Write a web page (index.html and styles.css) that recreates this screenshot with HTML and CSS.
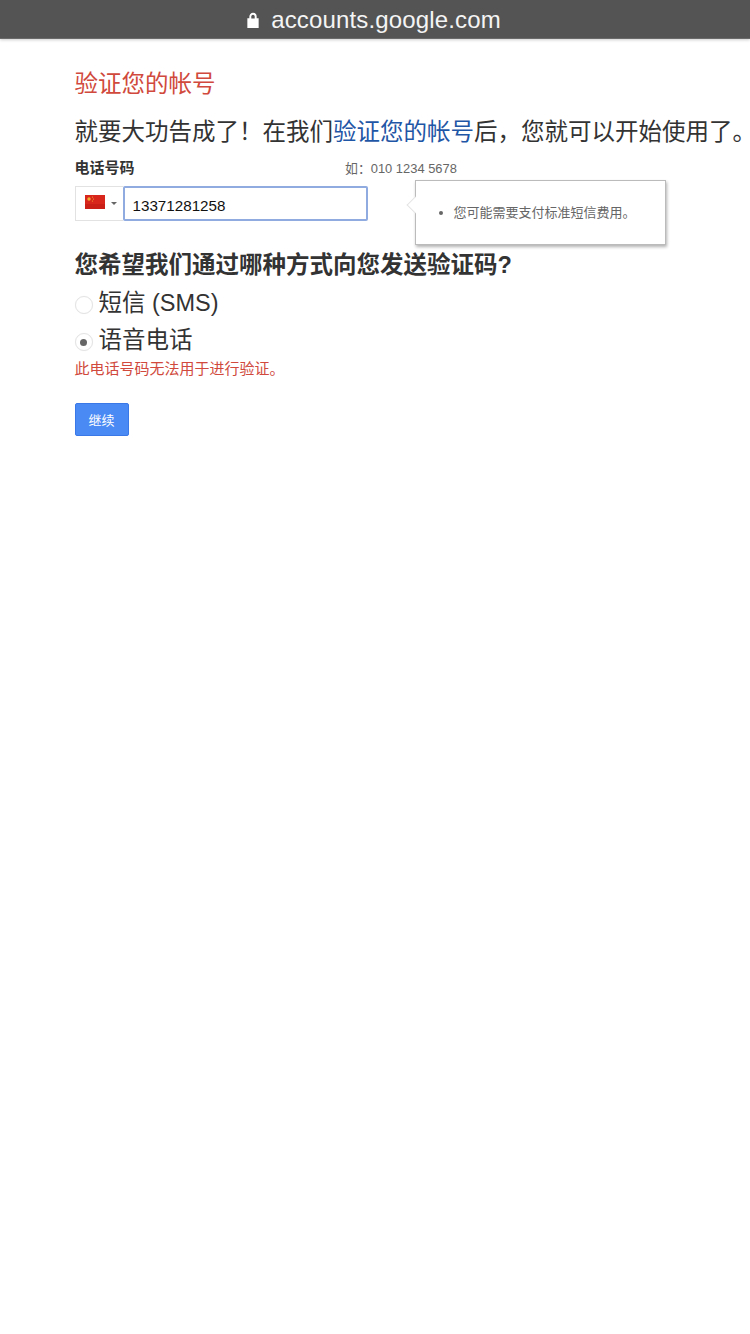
FILE: index.html

```html
<!DOCTYPE html>
<html lang="zh">
<head>
  <meta charset="utf-8">
  <title>验证您的帐号</title>
  <link rel="stylesheet" href="styles.css">
</head>
<body>
  <div class="topbar">
    <svg class="lock" width="12" height="16" viewBox="0 0 12 16">
      <path d="M1 7h10v8.500H1z M3 7V4.500a3 3 0 0 1 6 0V7" fill="#fff" stroke="#fff" stroke-width="1.300" fill-rule="nonzero"/>
      <path d="M4.300 6.500V4.500a1.700 1.700 0 0 1 3.400 0v2z" fill="#555"/>
    </svg>
    <span class="url">accounts.google.com</span>
  </div>

  <div class="contenido">
    <h1 class="titulo">验证您的帐号</h1>
    <p class="intro">就要大功告成了！在我们<a href="#">验证您的帐号</a>后，您就可以开始使用了<span class="punto">。</span></p>

    <div class="fila-label">
      <label class="label-tel" for="tel">电话号码</label>
      <span class="ejemplo">如：010 1234 5678</span>
    </div>

    <div class="fila-tel">
      <div class="pais">
        <svg class="bandera" width="20" height="14" viewBox="0 0 20 14">
          <rect width="20" height="14" fill="#d8261c"/>
          <rect y="9" width="20" height="5" fill="#c01a14" opacity=".6"/>
          <circle cx="4" cy="4" r="1.700" fill="#f0b030"/>
          <circle cx="7.500" cy="2" r=".6" fill="#f0b030"/>
          <circle cx="8.500" cy="4" r=".6" fill="#f0b030"/>
          <circle cx="7.500" cy="6" r=".6" fill="#f0b030"/>
        </svg>
        <span class="flecha"></span>
      </div>
      <input class="tel" id="tel" type="text" value="13371281258">
      <div class="tooltip">
        <span class="tooltip-punta"></span>
        <ul>
          <li>您可能需要支付标准短信费用。</li>
        </ul>
      </div>
    </div>

    <h2 class="pregunta">您希望我们通过哪种方式向您发送验证码?</h2>

    <div class="opcion">
      <span class="radio"></span>
      <span>短信 (SMS)</span>
    </div>
    <div class="opcion opcion-2">
      <span class="radio marcado"></span>
      <span>语音电话</span>
    </div>

    <p class="error">此电话号码无法用于进行验证。</p>

    <button class="continuar" type="button">继续</button>
  </div>
</body>
</html>
```

FILE: styles.css

```css
body {
  font-family: "Liberation Sans", "Noto Sans CJK SC", sans-serif;
  margin: 0;
  padding: 0;
  background-color: #fff;
  color: #333;
  overflow-x: hidden;
}

.topbar {
  display: flex;
  justify-content: center;
  align-items: center;
  gap: 12px;
  height: 39px;
  padding-right: 2px;
  padding-top: 2px;
  box-sizing: border-box;
  background-color: #545454;
  border-bottom: 1px solid #6a6a6a;
  box-shadow: 0 1px 3px rgba(0, 0, 0, 0.2);
}

.url {
  color: #f4f4f4;
  font-family: "Liberation Sans", sans-serif;
  font-size: 24px;
  letter-spacing: 0.15px;
}

.contenido {
  padding-left: 74.500px;
  padding-top: 29px;
}

.titulo {
  margin: 0;
  font-size: 23.500px;
  font-weight: normal;
  line-height: 32px;
  color: #d0493c;
}

.intro {
  margin: 16px 0 0 0;
  font-size: 23.500px;
  line-height: 32px;
  white-space: nowrap;
}

.intro a {
  color: #1f56a5;
  text-decoration: none;
}

.punto {
  font-feature-settings: "halt";
}

.fila-label {
  display: flex;
  align-items: baseline;
  margin-top: 8px;
  height: 23px;
  line-height: 23px;
}

.label-tel {
  width: 270.500px;
  font-size: 15px;
  font-weight: bold;
}

.ejemplo {
  font-size: 12.900px;
  color: #666;
}

.fila-tel {
  position: relative;
  display: flex;
  width: 293px;
  height: 35px;
  margin-top: 7px;
}

.pais {
  display: flex;
  align-items: center;
  width: 48px;
  padding-left: 9px;
  box-sizing: border-box;
  border: 1px solid #e2e2e2;
  border-right: none;
}

.bandera {
  display: block;
  margin-top: -3px;
}

.flecha {
  width: 0;
  height: 0;
  margin-left: 6px;
  border-left: 3px solid transparent;
  border-right: 3px solid transparent;
  border-top: 3px solid #666;
}

.tel {
  width: 245px;
  height: 35px;
  margin: 0;
  padding: 3px 0 0 8px;
  box-sizing: border-box;
  border: 2px solid #8fabe0;
  border-radius: 2px;
  outline: none;
  font-family: "Liberation Sans", sans-serif;
  font-size: 15.200px;
  color: #111;
  background-color: #fff;
}

.tooltip {
  position: absolute;
  left: 340px;
  top: -6px;
  width: 251px;
  height: 65px;
  padding-bottom: 3px;
  box-sizing: border-box;
  background-color: #fff;
  border: 1px solid #bbb;
  box-shadow: 1px 2px 3px rgba(0, 0, 0, 0.3);
  display: flex;
  align-items: center;
}

.tooltip-punta {
  position: absolute;
  left: -7px;
  top: 18px;
  width: 11px;
  height: 11px;
  background-color: #fff;
  border-left: 1px solid #e4e4e4;
  border-bottom: 1px solid #e4e4e4;
  transform: rotate(45deg);
}

.tooltip ul {
  margin: 0;
  padding: 0 0 0 38px;
  font-size: 13px;
  color: #666;
}

.pregunta {
  margin: 28px 0 0 0;
  font-size: 23.500px;
  font-weight: bold;
  line-height: 32px;
}

.opcion {
  display: flex;
  align-items: center;
  gap: 6px;
  margin-top: 6px;
  height: 32px;
  font-size: 23.500px;
  line-height: 32px;
}

.opcion-2 {
  margin-top: 5px;
}

.radio {
  position: relative;
  width: 18px;
  height: 18px;
  margin-top: 4px;
  box-sizing: border-box;
  border: 1px solid #e4e4e4;
  border-radius: 50%;
  background-color: #fff;
  box-shadow: 0 0 1px #eee;
}

.marcado::after {
  content: "";
  position: absolute;
  left: 4.500px;
  top: 4.500px;
  width: 7px;
  height: 7px;
  border-radius: 50%;
  background-color: #666;
}

.error {
  margin: 3px 0 0 0;
  font-size: 15px;
  line-height: 20px;
  color: #d0493c;
}

.continuar {
  display: block;
  width: 54px;
  height: 33px;
  margin-top: 24px;
  padding: 0;
  border: 1px solid #3b78e7;
  border-radius: 2px;
  background-color: #4a8af4;
  color: #fff;
  font-family: "Liberation Sans", "Noto Sans CJK SC", sans-serif;
  font-size: 13px;
}
```
